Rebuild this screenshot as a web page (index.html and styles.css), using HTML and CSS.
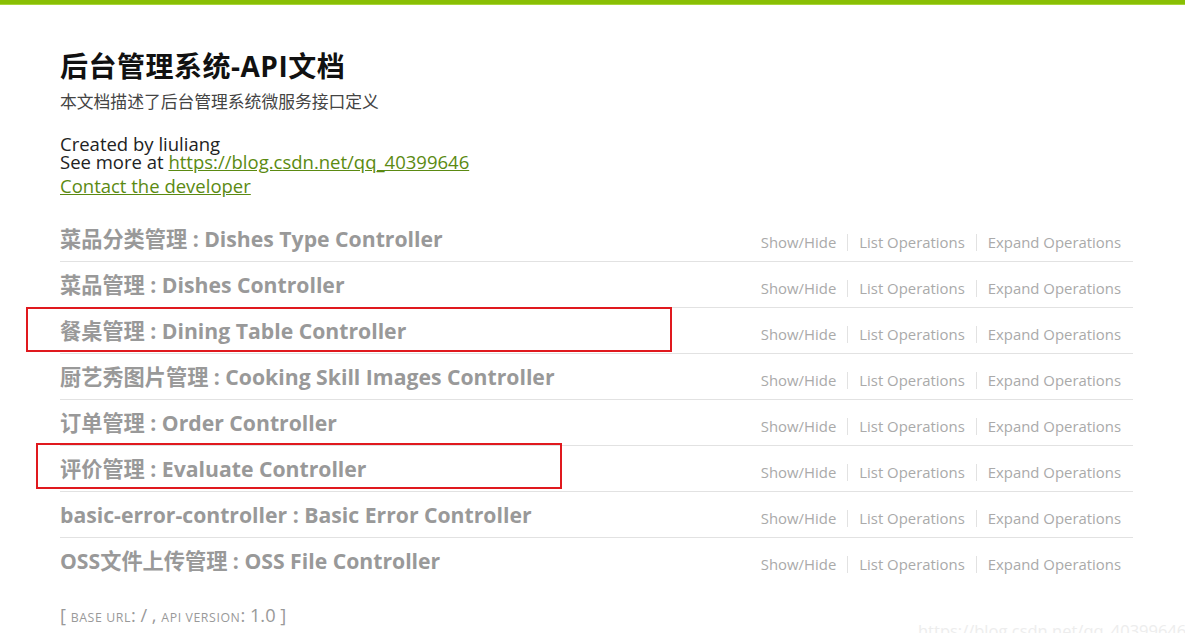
FILE: index.html
```html
<!DOCTYPE html>
<html lang="zh-CN">
<head>
<meta charset="utf-8">
<title>后台管理系统-API文档</title>
<link rel="stylesheet" href="styles.css">
</head>
<body>
<div class="topbar"></div>
<div class="wrap">
  <div class="info">
    <h1 class="info-title">后台管理系统-API文档</h1>
    <div class="info-desc">本文档描述了后台管理系统微服务接口定义</div>
    <div class="info-meta">Created by liuliang<br>See more at <a href="#">https://blog.csdn.net/qq_40399646</a></div>
    <div class="info-contact"><a href="#">Contact the developer</a></div>
  </div>
  <ul class="resources">
    <li class="resource"><h2 class="res-title">菜品分类管理 : Dishes Type Controller</h2><ul class="options"><li>Show/Hide</li><li>List Operations</li><li>Expand Operations</li></ul></li>
    <li class="resource"><h2 class="res-title">菜品管理 : Dishes Controller</h2><ul class="options"><li>Show/Hide</li><li>List Operations</li><li>Expand Operations</li></ul></li>
    <li class="resource"><h2 class="res-title">餐桌管理 : Dining Table Controller</h2><ul class="options"><li>Show/Hide</li><li>List Operations</li><li>Expand Operations</li></ul></li>
    <li class="resource"><h2 class="res-title">厨艺秀图片管理 : Cooking Skill Images Controller</h2><ul class="options"><li>Show/Hide</li><li>List Operations</li><li>Expand Operations</li></ul></li>
    <li class="resource"><h2 class="res-title">订单管理 : Order Controller</h2><ul class="options"><li>Show/Hide</li><li>List Operations</li><li>Expand Operations</li></ul></li>
    <li class="resource"><h2 class="res-title">评价管理 : Evaluate Controller</h2><ul class="options"><li>Show/Hide</li><li>List Operations</li><li>Expand Operations</li></ul></li>
    <li class="resource"><h2 class="res-title">basic-error-controller : Basic Error Controller</h2><ul class="options"><li>Show/Hide</li><li>List Operations</li><li>Expand Operations</li></ul></li>
    <li class="resource"><h2 class="res-title">OSS文件上传管理 : OSS File Controller</h2><ul class="options"><li>Show/Hide</li><li>List Operations</li><li>Expand Operations</li></ul></li>
  </ul>
  <div class="footer">[ <span class="sc">base url</span>: / , <span class="sc">api version</span>: 1.0 ]</div>
</div>
<div class="annot annot-1"></div>
<div class="annot annot-2"></div>
<div class="watermark">https://blog.csdn.net/qq_40399646</div>
</body>
</html>
```
FILE: styles.css
```css
* { box-sizing: border-box; }
html, body { margin: 0; padding: 0; background: #fff; }
body {
  font-family: "Open Sans", "Noto Sans CJK SC", sans-serif;
  color: #222;
  position: relative;
  height: 633px;
  overflow: hidden;
}
.topbar {
  height: 5px;
  background: #89bf04;
  border-bottom: 1px solid #a8d43a;
}
.wrap {
  width: 1133px;
  padding-left: 60px;
}
.info { padding-top: 44px; }
.info-title {
  margin: 0;
  font-size: 28px;
  line-height: 34px;
  letter-spacing: 0.5px;
  font-weight: bold;
  color: #111;
}
.info-desc {
  margin-top: 9px;
  font-size: 16.8px;
  line-height: 20px;
  color: #444;
}
.info-meta {
  margin-top: 23px;
  font-size: 18.5px;
  line-height: 18px;
  color: #222;
}
.info-contact {
  margin-top: 6px;
  font-size: 18.5px;
  line-height: 18px;
}
a { color: #5b8a12; text-decoration: underline; }
.resources {
  list-style: none;
  margin: 21px 0 0;
  padding: 0;
}
.resource {
  height: 46px;
  border-bottom: 1px solid #e2e2e2;
  display: flex;
  align-items: center;
  justify-content: space-between;
}
.resource:last-child { border-bottom: none; height: 45px; }
.res-title {
  margin: 0;
  font-size: 21.2px;
  font-weight: bold;
  color: #999;
  line-height: 28px;
}
.options {
  list-style: none;
  margin: 7px 0 0;
  padding: 0;
  display: flex;
  font-size: 14.9px;
  color: #aaa;
}
.options li {
  padding: 0 11px;
  line-height: 17px;
  border-right: 1px solid #e2e2e2;
}
.options li:last-child { border-right: none; padding-right: 12px; }
.footer {
  margin-top: 20px;
  font-size: 18.2px;
  line-height: 24px;
  color: #999;
}
.sc {
  text-transform: uppercase;
  font-size: 12.3px;
  letter-spacing: 0.6px;
}
.annot {
  position: absolute;
  border: 2px solid #e0191e;
}
.annot-1 { left: 26px; top: 307px; width: 646px; height: 45px; }
.annot-2 { left: 36px; top: 443px; width: 526px; height: 46px; }
.watermark {
  position: absolute;
  left: 918px;
  top: 619px;
  font-size: 16.5px;
  color: #ededed;
  white-space: nowrap;
}
```
